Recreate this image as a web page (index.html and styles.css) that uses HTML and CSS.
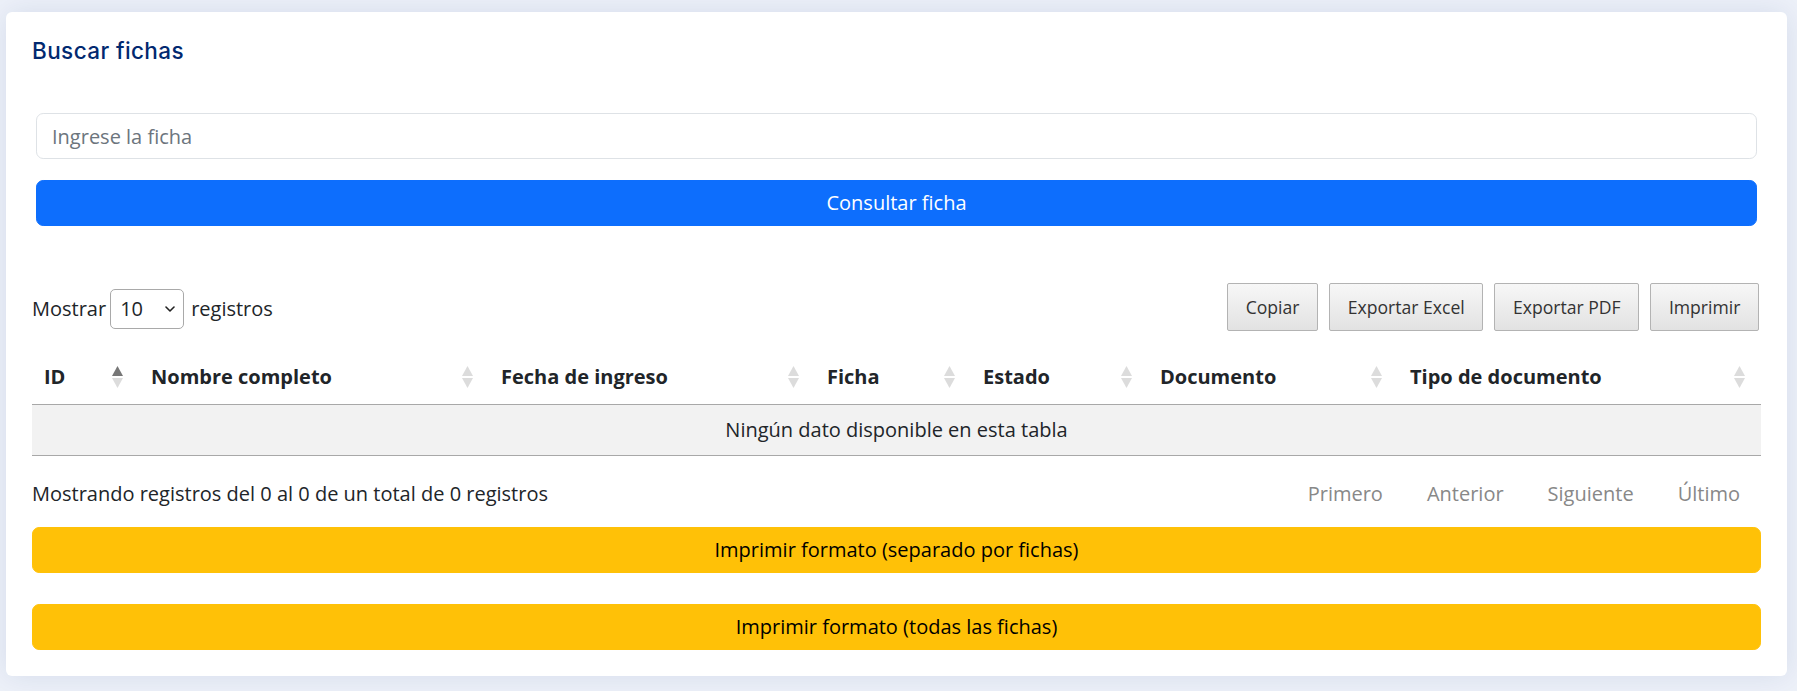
FILE: index.html
```html
<!DOCTYPE html>
<html lang="es">
<head>
<meta charset="utf-8">
<title>Buscar fichas</title>
<link rel="stylesheet" href="styles.css">
</head>
<body>
<main class="main">
  <section class="card">
    <div class="card-body">
      <h5 class="card-title">Buscar fichas</h5>
      <form class="search">
        <input class="form-control" type="text" placeholder="Ingrese la ficha">
        <button class="btn btn-primary" type="button">Consultar ficha</button>
      </form>

      <div class="dt-top">
        <div class="dt-length">
          <span>Mostrar</span>
          <span class="fake-select"><span>10</span><svg class="chev" viewBox="0 0 10 6" width="10" height="6"><path d="M1 1 L5 5 L9 1" fill="none" stroke="#222" stroke-width="1.6" stroke-linecap="round" stroke-linejoin="round"/></svg></span>
          <span class="after">registros</span>
        </div>
        <div class="dt-buttons">
          <button class="dt-button" type="button">Copiar</button>
          <button class="dt-button" type="button">Exportar Excel</button>
          <button class="dt-button" type="button">Exportar PDF</button>
          <button class="dt-button" type="button">Imprimir</button>
        </div>
      </div>

      <table class="dt">
        <colgroup>
          <col class="c-id"><col class="c-nombre"><col class="c-fecha"><col class="c-ficha"><col class="c-estado"><col class="c-doc"><col class="c-tipo">
        </colgroup>
        <thead>
          <tr>
            <th><div class="th-in"><span>ID</span><svg class="sort" viewBox="0 0 11 22" width="11" height="22"><polygon class="up on" points="5.5,0 11,10 0,10"/><polygon class="down" points="0,12 11,12 5.5,22"/></svg></div></th>
            <th><div class="th-in"><span>Nombre completo</span><svg class="sort" viewBox="0 0 11 22" width="11" height="22"><polygon class="up" points="5.5,0 11,10 0,10"/><polygon class="down" points="0,12 11,12 5.5,22"/></svg></div></th>
            <th><div class="th-in"><span>Fecha de ingreso</span><svg class="sort" viewBox="0 0 11 22" width="11" height="22"><polygon class="up" points="5.5,0 11,10 0,10"/><polygon class="down" points="0,12 11,12 5.5,22"/></svg></div></th>
            <th><div class="th-in"><span>Ficha</span><svg class="sort" viewBox="0 0 11 22" width="11" height="22"><polygon class="up" points="5.5,0 11,10 0,10"/><polygon class="down" points="0,12 11,12 5.5,22"/></svg></div></th>
            <th><div class="th-in"><span>Estado</span><svg class="sort" viewBox="0 0 11 22" width="11" height="22"><polygon class="up" points="5.5,0 11,10 0,10"/><polygon class="down" points="0,12 11,12 5.5,22"/></svg></div></th>
            <th><div class="th-in"><span>Documento</span><svg class="sort" viewBox="0 0 11 22" width="11" height="22"><polygon class="up" points="5.5,0 11,10 0,10"/><polygon class="down" points="0,12 11,12 5.5,22"/></svg></div></th>
            <th><div class="th-in"><span>Tipo de documento</span><svg class="sort" viewBox="0 0 11 22" width="11" height="22"><polygon class="up" points="5.5,0 11,10 0,10"/><polygon class="down" points="0,12 11,12 5.5,22"/></svg></div></th>
          </tr>
        </thead>
        <tbody>
          <tr><td class="empty" colspan="7">Ningún dato disponible en esta tabla</td></tr>
        </tbody>
      </table>

      <div class="dt-bottom">
        <div class="dt-info">Mostrando registros del 0 al 0 de un total de 0 registros</div>
        <div class="dt-paginate">
          <span class="pg">Primero</span>
          <span class="pg">Anterior</span>
          <span class="pg">Siguiente</span>
          <span class="pg">Último</span>
        </div>
      </div>

      <button class="btn btn-warning first" type="button">Imprimir formato (separado por fichas)</button>
      <button class="btn btn-warning second" type="button">Imprimir formato (todas las fichas)</button>
    </div>
  </section>
</main>
</body>
</html>
```

FILE: styles.css
```css
* { box-sizing: border-box; }

html, body { margin: 0; padding: 0; }

body {
  background: #edf1f9;
  font-family: "Open Sans", "Liberation Sans", sans-serif;
  font-size: 20px;
  line-height: 28.8px;
  color: #212529;
}

.main {
  padding: 12px 10px 15px 6px;
}

.card {
  background: #fff;
  border-radius: 6px;
  box-shadow: 0 0 30px rgba(1, 41, 112, 0.1);
}

.card-body {
  padding: 0 26px 26px 26px;
}

.card-title {
  margin: 0;
  padding: 26px 0 16px 0;
  font-family: "Inter", "Noto Sans", sans-serif;
  font-weight: 500;
  font-size: 22.5px;
  line-height: 26px;
  letter-spacing: 0.4px;
  color: #012970;
}

.search {
  margin: 33px 4px 0 4px;
  display: flex;
  flex-direction: column;
  gap: 21px;
}

.form-control {
  display: block;
  width: 100%;
  height: 46px;
  padding: 7px 15px;
  font-family: "Open Sans", sans-serif;
  font-size: 20px;
  color: #212529;
  border: 1px solid #dee2e6;
  border-radius: 7.2px;
  background: #fff;
  outline: none;
}

.form-control::placeholder { color: #6c757d; }

.btn {
  display: block;
  width: 100%;
  height: 46px;
  padding: 0 14px;
  font-family: "Open Sans", sans-serif;
  font-size: 20px;
  line-height: 28.8px;
  border: 1px solid transparent;
  border-radius: 7.2px;
  text-align: center;
  cursor: pointer;
}

.btn-primary {
  background: #0d6efd;
  border-color: #0d6efd;
  color: #fff;
}

.btn-warning {
  background: #ffc107;
  border-color: #ffc107;
  color: #000;
}

.btn-warning.first { margin-top: 8px; }
.btn-warning.second { margin-top: 31px; }

/* DataTables toolbar */
.dt-top {
  margin-top: 57px;
  display: flex;
  justify-content: space-between;
  align-items: center;
}

.dt-length {
  display: flex;
  align-items: center;
  gap: 4px;
  padding-top: 4px;
}

.dt-length .after { margin-left: 3px; }

.fake-select {
  display: inline-flex;
  align-items: center;
  justify-content: space-between;
  width: 74px;
  height: 40px;
  padding: 0 8px 0 9px;
  border: 1px solid #a9a9a9;
  border-radius: 5px;
  background: #fff;
}

.chev { display: block; }

.dt-buttons {
  display: flex;
  gap: 11px;
  padding-right: 2px;
}

.dt-button {
  height: 48px;
  padding: 0 17.6px;
  font-family: "Open Sans", sans-serif;
  font-size: 17.6px;
  color: #333;
  border: 1px solid #b3b3b3;
  border-radius: 2px;
  background: linear-gradient(to bottom, #f7f7f7 0%, #e2e2e2 100%);
  cursor: pointer;
}

/* Table */
.dt {
  width: 100%;
  margin-top: 20px;
  border-collapse: collapse;
  table-layout: fixed;
}

.c-id { width: 107px; }
.c-nombre { width: 350px; }
.c-fecha { width: 326px; }
.c-ficha { width: 156px; }
.c-estado { width: 177px; }
.c-doc { width: 250px; }
.c-tipo { width: 363px; }

.dt th {
  padding: 12px 16px 12px 12px;
  text-align: left;
  font-weight: 700;
  border-bottom: 1px solid #a8a8a8;
}

.th-in {
  display: flex;
  align-items: center;
  justify-content: space-between;
}

.sort { display: block; flex: none; }
.sort polygon { fill: #dcdcdc; }
.sort polygon.on { fill: #777; }

.dt td.empty {
  background: #f2f2f2;
  text-align: center;
  padding: 10.8px 12px;
  border-bottom: 1px solid #a8a8a8;
}

.dt-bottom {
  margin-top: 13px;
  display: flex;
  justify-content: space-between;
  align-items: center;
}

.dt-paginate {
  display: flex;
}

.pg {
  display: inline-block;
  padding: 9.6px 20px;
  margin-left: 2px;
  border: 1px solid transparent;
  color: #888;
}
```
